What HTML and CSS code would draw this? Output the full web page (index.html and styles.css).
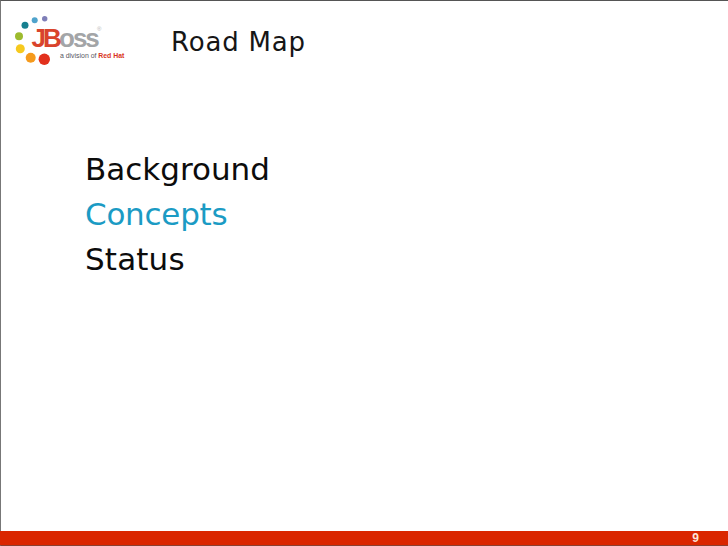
FILE: index.html
```
<!DOCTYPE html>
<html lang="en">
<head>
<meta charset="utf-8">
<title>Road Map</title>
<link rel="stylesheet" href="styles.css">
</head>
<body>
<div class="slide">
  <header class="head">
    <svg class="logo" width="140" height="70" viewBox="0 0 140 70" aria-label="JBoss, a division of Red Hat">
      <circle cx="44.7" cy="18.7" r="2.7" fill="#7f7fb8"/>
      <circle cx="34.7" cy="20.3" r="3" fill="#4fa3cc"/>
      <circle cx="25" cy="25.3" r="3.5" fill="#17808f"/>
      <circle cx="19" cy="36.3" r="4" fill="#9dbb2e"/>
      <circle cx="20.3" cy="48.7" r="4.5" fill="#f6c91e"/>
      <circle cx="30.7" cy="57.7" r="5" fill="#f59a1c"/>
      <circle cx="44.3" cy="59.3" r="5.7" fill="#e2301c"/>
      <text x="59" y="46.7" class="logo-oss">oss</text>
      <text x="31.5" y="46.7" class="logo-j">JB</text>
      <text x="97" y="31" class="logo-r">®</text>
      <text x="60" y="58" class="logo-sub">a division of <tspan class="logo-red">Red Hat</tspan></text>
    </svg>
    <h1 class="title">Road Map</h1>
  </header>
  <ul class="items">
    <li>Background</li>
    <li class="active">Concepts</li>
    <li class="last">Status</li>
  </ul>
  <footer class="bar"><span class="page">9</span></footer>
</div>
</body>
</html>
```

FILE: styles.css
```
html, body {
  margin: 0;
  padding: 0;
  background: #fff;
}
.slide {
  box-sizing: border-box;
  width: 728px;
  height: 546px;
  display: flex;
  flex-direction: column;
  border-top: 1px solid #555;
  border-left: 1px solid #777;
  border-bottom: 1px solid #8a4030;
  font-family: "DejaVu Sans", Verdana, sans-serif;
  color: #0c0c0c;
}
.head {
  display: flex;
  align-items: flex-start;
  height: 139px;
  flex: none;
}
.logo {
  display: block;
  flex: none;
  margin-left: -1px;
  margin-top: -1px;
}
.logo text {
  font-family: "Liberation Sans", Arial, sans-serif;
}
.logo .logo-j {
  font-size: 26px;
  font-weight: 700;
  fill: #d9442c;
  letter-spacing: -3px;
}
.logo .logo-oss {
  font-size: 26px;
  font-weight: 700;
  fill: #a3a5a7;
  letter-spacing: -2px;
}
.logo .logo-r {
  font-size: 6px;
  fill: #b5b5b5;
}
.logo .logo-sub {
  font-size: 6.9px;
  fill: #55555f;
}
.logo .logo-red {
  font-weight: 700;
  fill: #d9341c;
}
.title {
  margin: 25px 0 0 31px;
  font-size: 26px;
  font-weight: 400;
  line-height: 32px;
  letter-spacing: 0.8px;
  color: #161616;
}
.items {
  list-style: none;
  margin: 0;
  padding: 7px 0 0 84px;
  flex: 1;
  font-size: 31px;
  line-height: 45px;
}
.active {
  color: #1b9bc4;
  letter-spacing: -0.25px;
}
.last {
  letter-spacing: 0.15px;
}
.bar {
  flex: none;
  height: 14px;
  margin-left: -1px;
  background: #da2600;
  display: flex;
  justify-content: flex-end;
  align-items: center;
  padding-right: 29px;
}
.page {
  font-family: "Liberation Sans", Arial, sans-serif;
  font-size: 12px;
  font-weight: 700;
  color: #fde3d8;
  line-height: 14px;
}
```
